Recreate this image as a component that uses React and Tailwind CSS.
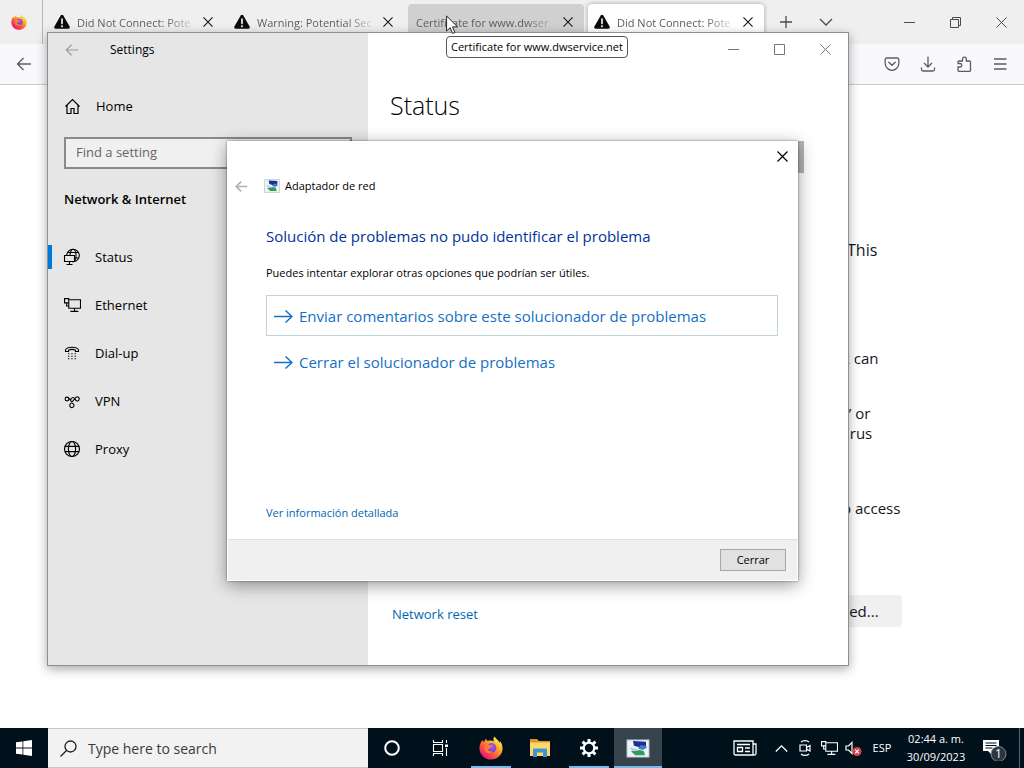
/**
 * Desktop
 * -------
 * A Windows desktop with three layers:
 *  - a browser filling the screen
 *  - the Settings window (Network & Internet > Status)
 *  - the network adapter troubleshooter dialog
 * The taskbar sits at the bottom.
 */

import React from "react";

/* -----------------------------
   SHARED ICONS
------------------------------ */
function Stroke({ size = 16, box = 16, width = 1, className = "", children }) {
  return (
    <svg
      width={size}
      height={size}
      viewBox={`0 0 ${box} ${box}`}
      fill="none"
      stroke="currentColor"
      strokeWidth={width}
      className={`shrink-0 ${className}`}
      aria-hidden="true"
    >
      {children}
    </svg>
  );
}

const CloseIcon = ({ size = 11, width = 1 }) => (
  <Stroke size={size} box={11} width={width}>
    <path d="M.5 .5l10 10M10.5 .5l-10 10" />
  </Stroke>
);

const MinimizeIcon = () => (
  <Stroke size={11} box={11}>
    <path d="M0 5.5h11" />
  </Stroke>
);

const MaximizeIcon = () => (
  <Stroke size={11} box={11}>
    <path d="M.5 .5h10v10H.5z" />
  </Stroke>
);

const RestoreIcon = () => (
  <Stroke size={11} box={11}>
    <path d="M.5 2.5h8v8h-8zM2.5 2.5v-2h8v8h-2" />
  </Stroke>
);

const BackIcon = ({ size = 16, width = 1 }) => (
  <Stroke size={size} width={width}>
    <path d="M15 8H1.5M7.5 2L1.5 8l6 6" />
  </Stroke>
);

const WarningIcon = () => (
  <svg width="16" height="16" viewBox="0 0 16 16" className="shrink-0" aria-hidden="true">
    <path d="M6.7 1.6a1.5 1.5 0 0 1 2.6 0l6.300 11a1.5 1.5 0 0 1-1.3 2.2H1.700a1.5 1.5 0 0 1-1.300-2.2z" fill="#0c0c0d" />
    <path d="M8 5v4.6" stroke="#fff" strokeWidth="1.6" strokeLinecap="round" />
    <circle cx="8" cy="12.2" r="1" fill="#fff" />
  </svg>
);

function FirefoxIcon({ size, id }) {
  return (
    <svg width={size} height={size} viewBox="0 0 24 24" className="shrink-0" aria-hidden="true">
      <defs>
        <linearGradient id={`${id}-fire`} x1="20" y1="3" x2="5" y2="21" gradientUnits="userSpaceOnUse">
          <stop offset="0" stopColor="#fff14a" />
          <stop offset=".35" stopColor="#ffa52c" />
          <stop offset=".65" stopColor="#ff5a36" />
          <stop offset="1" stopColor="#e8177a" />
        </linearGradient>
        <radialGradient id={`${id}-globe`} cx=".6" cy=".3" r=".8">
          <stop offset="0" stopColor="#a85cf0" />
          <stop offset="1" stopColor="#5b3fc4" />
        </radialGradient>
      </defs>
      <path
        d="M15.4.6c-1.3 1.5-1.2 3.4-.4 4.8-1.8-1-4-1.2-6.2-.5-1-.5-1.6-1.5-1.7-2.2C6 3.6 5.4 4.8 5.3 6 4.5 5.8 3.700 5 3.500 4 1.400 6.600.300 9.400.500 13c.4 6.200 5.300 10.600 11.500 10.600S23.600 18.800 23.600 12.600c0-3-1-5.700-2.700-7.600.1 1 .1 1.600 0 2.200C20 4.300 17 3.400 15.400.6z"
        fill={`url(#${id}-fire)`}
      />
      <circle cx="12.6" cy="11.8" r="4.8" fill={`url(#${id}-globe)`} />
      <path
        d="M6 9.2c1.600-1.200 3.500-1 4.900.1 1 .2 2.200 0 2.700.6-.2 1.100-1.700 1.200-2.200 1.900-.2 1.300-1.500 1.700-2.700 1.700.8 1.700 3.200 2.300 5.200 1.200-1.500 3-6 3.300-8-.2C5 12.800 5 10.700 6 9.200z"
        fill="#ff7a35"
      />
    </svg>
  );
}

/* Monitor with a blue and green globe, used by the troubleshooter */
function TroubleshooterIcon({ className = "w-4 h-[14px]" }) {
  return (
    <svg viewBox="0 0 24 20" className={`shrink-0 ${className}`} preserveAspectRatio="none" aria-hidden="true">
      <rect x="1" y="1" width="22" height="18" fill="#eef3f8" stroke="#b4c2d0" />
      <path d="M7 2l13 1v5l-4 1.500L8 7z" fill="#1a2f9c" />
      <path d="M14 7c3-1 6 0 7 2l-4 2.500-5-1.500z" fill="#4a7ac0" />
      <path d="M5 13c4-2 9-2 13 0l1 4H9z" fill="#2f9b62" />
      <path d="M3 9c3 0 7 1 10 3l-6 1z" fill="#b9cfe4" />
    </svg>
  );
}

const PcIcon = ({ size = 16 }) => (
  <Stroke size={size}>
    <path d="M5 2.5h10.500v8H4.500V6M10 10.500v3M6 13.500h7.500M.5 1.500h4v4h-4zM2.500 5.500v3h2" />
  </Stroke>
);

/* -----------------------------
   BROWSER
------------------------------ */
const tabs = [
  { title: "Did Not Connect: Pote", warning: true },
  { title: "Warning: Potential Sec", warning: true },
  { title: "Certificate for www.dwser", hovered: true },
  { title: "Did Not Connect: Pote", warning: true, active: true },
];

function BrowserTab({ title, warning, hovered, active }) {
  const look = active
    ? "bg-white shadow-[0_0_4px_rgba(0,0,0,0.35)]"
    : hovered
      ? "bg-[#d0d0d0]"
      : "";
  return (
    <div
      role="tab"
      aria-selected={Boolean(active)}
      className={`mx-0.5 flex h-9 w-44 items-center rounded-t pl-2 pr-[11px] text-[#5b5b66] ${look}`}
    >
      {warning && (
        <span className="-ml-0.5 mr-[7px]">
          <WarningIcon />
        </span>
      )}
      <span className="min-w-0 flex-1 whitespace-nowrap pt-0.5 text-[11px] leading-4 [mask-image:linear-gradient(to_left,transparent,black_32px)]">
        {title}
      </span>
      <button type="button" aria-label="Close tab" className="ml-1.5 text-[#15141a]">
        <CloseIcon size={10} width={1.2} />
      </button>
    </div>
  );
}

function Browser() {
  return (
    <div className="flex flex-1 flex-col bg-white">
      {/* Tab strip */}
      <div className="flex h-11 items-center bg-[#efefef] text-[#4a4a52]">
        <div className="flex h-11 w-[43px] items-center justify-center border-r border-[#b9b9b9] pr-1">
          <FirefoxIcon size={16} id="pinned" />
        </div>
        <div role="tablist" className="ml-[3px] flex">
          {tabs.map((tab, i) => (
            <BrowserTab key={i} {...tab} />
          ))}
        </div>
        <button type="button" aria-label="New tab" className="flex w-10 justify-center">
          <Stroke size={12} box={12} width={1.3}>
            <path d="M6 0v12M0 6h12" />
          </Stroke>
        </button>
        <button type="button" aria-label="List all tabs" className="flex w-10 justify-center">
          <Stroke size={14} box={14} width={1.3}>
            <path d="M1 4l6 6 6-6" />
          </Stroke>
        </button>
        <div className="ml-auto flex">
          <button type="button" aria-label="Minimize" className="flex w-[46px] justify-center">
            <MinimizeIcon />
          </button>
          <button type="button" aria-label="Restore" className="flex w-[46px] justify-center">
            <RestoreIcon />
          </button>
          <button type="button" aria-label="Close" className="flex w-[46px] justify-center">
            <CloseIcon />
          </button>
        </div>
      </div>

      {/* Toolbar */}
      <div className="flex h-[41px] items-center justify-between border-b border-[#cbcbce] bg-[#f9f9fb] px-4 text-[#5b5b66]">
        <button type="button" aria-label="Back">
          <BackIcon width={1.3} />
        </button>
        <div className="flex gap-5">
          <button type="button" aria-label="Save to Pocket">
            <Stroke width={1.3}>
              <path d="M2.5 2h11a1.300 1.300 0 0 1 1.300 1.300V7.500a6.800 6.800 0 0 1-13.600 0V3.300A1.300 1.300 0 0 1 2.500 2z" />
              <path d="M4.8 6.200L8 9.300l3.200-3.100" strokeLinecap="round" />
            </Stroke>
          </button>
          <button type="button" aria-label="Downloads">
            <Stroke width={1.3}>
              <path d="M8 .5v10.500M4 7l4 4 4-4M1.500 11.500v2a1.500 1.500 0 0 0 1.500 1.500h10a1.500 1.500 0 0 0 1.500-1.500v-2" />
            </Stroke>
          </button>
          <button type="button" aria-label="Extensions">
            <Stroke width={1.3}>
              <path d="M2 14.500V11h2a1.700 1.700 0 0 0 0-3.500H2V6a1 1 0 0 1 1-1h3.500V3a1.900 1.900 0 0 1 3.800 0v2H13.500a1 1 0 0 1 1 1v8.500a.8.800 0 0 1-.8.800H2.800a.8.800 0 0 1-.8-.8z" />
            </Stroke>
          </button>
          <button type="button" aria-label="Open application menu">
            <Stroke width={1.3}>
              <path d="M2 3h12.500M2 8h12.500M2 13h12.500" />
            </Stroke>
          </button>
        </div>
      </div>

      {/* Page text, mostly covered by the Settings window */}
      <main className="ml-[842px] pt-[153px] text-[15px] leading-5 text-[#15141a]">
        <p className="pl-[5px] text-base leading-6">This</p>
        <p className="mt-[86px]">x can</p>
        <p className="mt-[35px] pl-1">
          ” or
          <br />
          irus
        </p>
        <p className="mt-[55px]">o access</p>
        <button
          type="button"
          className="mt-[77px] block h-8 rounded bg-[#f0f0f1] pr-[23px] text-[15px] font-medium"
        >
          ced...
        </button>
      </main>
    </div>
  );
}

/* -----------------------------
   SETTINGS WINDOW
------------------------------ */
const GlobeIcon = () => (
  <Stroke size={18} box={18} width={1.2}>
    <circle cx="9" cy="9" r="7.5" />
    <ellipse cx="9" cy="9" rx="3.6" ry="7.5" />
    <path d="M2 6.300h14M2 11.700h14" />
  </Stroke>
);

/* Globe with a small monitor in front of it */
const StatusIcon = () => (
  <Stroke size={18} box={18} width={1.1}>
    <circle cx="10" cy="7.5" r="6.3" />
    <ellipse cx="10" cy="7.5" rx="3" ry="6.3" />
    <path d="M4.500 4.500h11M4 10h12" />
    <path d="M1.500 7.500h10v6h-10z" fill="#e6e6e6" />
    <path d="M6.500 13.500v3M3.500 16.500h6" />
  </Stroke>
);

const DialUpIcon = () => (
  <Stroke size={16} width={1.1}>
    <path d="M1.500 6.500V5C3 1.300 13 1.300 14.500 5v1.500h-3V5.200c-2-1-5-1-7 0v1.300z" />
    <path d="M4 8.800h8M4 11.300h8M4 13.800h8" strokeDasharray="1.3 2" />
  </Stroke>
);

const VpnIcon = () => (
  <Stroke size={17} box={17} width={1.1}>
    <circle cx="3" cy="6" r="1.900" />
    <path d="M4.800 5l4 5.600a2.100 2.100 0 1 1-2.600.6l5.600-6.700a2 2 0 1 1 .6 3.200c-1.500-.6-1.500-3.200-3.400-3.200-1.300 0-1.600 1.200-2.500 2.300" />
  </Stroke>
);

const settingsNav = [
  { label: "Status", icon: <StatusIcon />, active: true },
  { label: "Ethernet", icon: <PcIcon size={17} /> },
  { label: "Dial-up", icon: <DialUpIcon /> },
  { label: "VPN", icon: <VpnIcon /> },
  { label: "Proxy", icon: <GlobeIcon /> },
];

function SettingsWindow() {
  return (
    <section
      aria-label="Settings"
      className="absolute left-[47px] top-8 flex h-[634px] w-[802px] border border-[#8f8f8f] bg-white text-sm text-black shadow-[0_3px_10px_rgba(0,0,0,0.35)]"
    >
      {/* Sidebar */}
      <aside className="w-80 bg-[#e6e6e6]">
        <div className="flex h-[33px] items-center pl-[17px] text-xs">
          <button type="button" aria-label="Back" className="mr-[31px] text-[#9a9a9a]">
            <BackIcon size={14} width={1.3} />
          </button>
          Settings
        </div>
        <a href="#home" className="mt-6 flex h-8 items-center gap-[15px] pl-4 text-[13px]">
          <Stroke size={17} box={17} width={1.2}>
            <path d="M1.500 8.500l7-7 7 7M3 7.500v8h4v-5h3v5h4v-8" />
          </Stroke>
          Home
        </a>
        <div className="mt-[15px] px-4">
          <input
            type="text"
            aria-label="Find a setting"
            placeholder="Find a setting"
            className="block h-8 w-full border-2 border-[#8a8a8a] bg-[#f0f0f0] px-2.5 pb-0.5 text-[13px] placeholder:text-[#666]"
          />
        </div>
        <h2 className="mt-5 pl-4 text-[13px] font-semibold leading-5">Network &amp; Internet</h2>
        <nav className="mt-6">
          {settingsNav.map((item) => (
            <a key={item.label} href={`#${item.label}`} className="flex h-12 items-center text-[13px]">
              <span className={`h-6 w-1 ${item.active ? "bg-[#0078d7]" : ""}`} />
              <span className="ml-[11px] mr-3.5 flex w-[18px] justify-center">{item.icon}</span>
              {item.label}
            </a>
          ))}
        </nav>
      </aside>

      {/* Content */}
      <div className="flex flex-1 flex-col">
        <div className="flex h-8 justify-end text-[#777]">
          <button type="button" aria-label="Minimize" className="flex w-[46px] items-center justify-center">
            <MinimizeIcon />
          </button>
          <button type="button" aria-label="Maximize" className="flex w-[46px] items-center justify-center">
            <MaximizeIcon />
          </button>
          <button type="button" aria-label="Close" className="flex w-[46px] items-center justify-center">
            <CloseIcon />
          </button>
        </div>
        <h1 className="mt-6 pl-[22px] text-[25px] font-light leading-8">Status</h1>
        {/* Scrollbar thumb */}
        <div className="ml-auto mr-11 mt-5 h-8 w-4 bg-[#b5b5b5]" />
        <a href="#reset" className="mb-[41px] mt-auto self-start pl-6 text-[13px] leading-5 text-[#0067b3]">
          Network reset
        </a>
      </div>
    </section>
  );
}

/* -----------------------------
   TROUBLESHOOTER DIALOG
------------------------------ */
function ArrowLink({ outlined, children }) {
  return (
    <button
      type="button"
      className={`flex h-[41px] w-full items-center gap-1.5 border pl-[7px] text-[15px] text-[#1570c4] ${
        outlined ? "border-[#c3d3da]" : "border-transparent"
      }`}
    >
      <Stroke size={19} box={19} width={1.5}>
        <path d="M0 10.500h18M11.500 4.500l6.500 6-6.500 6" />
      </Stroke>
      {children}
    </button>
  );
}

function TroubleshooterDialog() {
  return (
    <section
      role="dialog"
      aria-label="Adaptador de red"
      className="absolute left-[227px] top-[141px] flex min-h-[440px] w-[571px] flex-col bg-white text-[11px] leading-4 text-black shadow-[0_4px_16px_rgba(0,0,0,0.4),0_0_2px_rgba(0,0,0,0.5)]"
    >
      <button type="button" aria-label="Cerrar" className="flex h-[30px] w-8 items-center justify-center self-end">
        <CloseIcon width={1.2} />
      </button>
      <div className="flex h-[30px] items-center pl-2">
        <button type="button" aria-label="Back" className="mr-4 text-[#b0b0b0]">
          <BackIcon size={13} width={2} />
        </button>
        <TroubleshooterIcon />
        <span className="ml-[5px]">Adaptador de red</span>
      </div>
      <div className="flex flex-1 flex-col items-start pl-[39px] pr-5">
        <h2 className="mt-[23px] text-[15px] leading-6 text-[#003399]">
          Solución de problemas no pudo identificar el problema
        </h2>
        <p className="mb-3.5 mt-[17px]">Puedes intentar explorar otras opciones que podrían ser útiles.</p>
        <div className="flex w-full flex-col gap-[5px]">
          <ArrowLink outlined>Enviar comentarios sobre este solucionador de problemas</ArrowLink>
          <ArrowLink>Cerrar el solucionador de problemas</ArrowLink>
        </div>
        <a href="#details" className="mb-[18px] mt-auto text-[#0066b4]">
          Ver información detallada
        </a>
      </div>
      <footer className="flex h-[42px] items-center justify-end border border-t-[#dfdfdf] border-x-white border-b-white bg-[#f0f0f0] pr-[11px]">
        <button type="button" className="h-[22px] w-[66px] border border-[#a5a5a5] bg-[#e1e1e1]">
          Cerrar
        </button>
      </footer>
    </section>
  );
}

/* -----------------------------
   TASKBAR
------------------------------ */
function TaskButton({ label, running, active, children }) {
  return (
    <button
      type="button"
      aria-label={label}
      className={`relative flex h-10 w-12 items-center justify-center ${active ? "bg-[#36434d]" : ""}`}
    >
      {children}
      {running && (
        <span className={`absolute bottom-0 h-0.5 bg-[#76b9ed] ${active ? "inset-x-0" : "inset-x-1"}`} />
      )}
    </button>
  );
}

function Taskbar() {
  return (
    <footer className="flex h-10 items-stretch bg-[#00111c] text-white">
      <TaskButton label="Start">
        <svg width="16" height="16" viewBox="0 0 16 16" fill="#fff" aria-hidden="true">
          <path d="M0 2.300l6.500-.9v6.200H0zM7.300 1.300L16 0v7.600H7.300zM0 8.400h6.500v6.200L0 13.700zM7.300 8.400H16V16l-8.700-1.200z" />
        </svg>
      </TaskButton>
      <label className="flex w-80 items-center border-y border-[#c4c4c4] bg-[#f2f2f2] pl-3 text-[#1b1b1b]">
        <Stroke size={17} box={17} width={1.3}>
          <circle cx="10.5" cy="6.5" r="5.5" />
          <path d="M6.500 10.500l-6 6" />
        </Stroke>
        <input
          type="text"
          aria-label="Type here to search"
          placeholder="Type here to search"
          className="ml-[11px] min-w-0 flex-1 bg-transparent pt-0.5 text-sm placeholder:text-[#3a3a3a]"
        />
      </label>
      <TaskButton label="Cortana">
        <Stroke width={2}>
          <circle cx="8" cy="8" r="6.8" />
        </Stroke>
      </TaskButton>
      <TaskButton label="Task View">
        <Stroke width={1.1}>
          <path d="M1.500 4.500h9v7h-9zM1.500 0v2.500h9V0M1.500 16v-2.500h9V16M14.500 0v3M14.500 8v8" />
          <path d="M13 4.500h3v2.500h-3z" fill="currentColor" stroke="none" />
        </Stroke>
      </TaskButton>
      <div className="ml-[3px] flex gap-px">
        <TaskButton label="Firefox" running>
          <FirefoxIcon size={24} id="taskbar" />
        </TaskButton>
        <TaskButton label="File Explorer">
          <svg width="22" height="20" viewBox="0 0 22 20" aria-hidden="true">
            <path d="M1 1h7l2 2h11v4H1z" fill="#d99a2b" />
            <path d="M1 4.500h20V18H1z" fill="#ffd869" />
            <path d="M4 19v-7.500a1 1 0 0 1 1-1h12a1 1 0 0 1 1 1V19h-4v-4.500H8V19z" fill="#3f95cf" />
          </svg>
        </TaskButton>
        <TaskButton label="Settings" running>
          <Stroke size={18} box={18}>
            <circle cx="9" cy="9" r="5.3" strokeWidth="2.2" />
            <path
              d="M9 0v3.500M9 14.500V18M0 9h3.500M14.500 9H18M2.600 2.600l2.400 2.400M13 13l2.400 2.400M2.600 15.400L5 13M13 5l2.400-2.400"
              strokeWidth="3"
            />
          </Stroke>
        </TaskButton>
        <TaskButton label="Adaptador de red" running active>
          <TroubleshooterIcon className="h-[19px] w-6" />
        </TaskButton>
      </div>

      {/* Notification area */}
      <div className="ml-auto flex items-center">
        <button type="button" aria-label="News" className="flex w-12 justify-center">
          <svg width="24" height="16" viewBox="0 0 24 16" fill="none" stroke="#fff" strokeWidth="1.3" aria-hidden="true">
            <path d="M1 1h19v14H2.500A1.500 1.500 0 0 1 1 13.500zM20 4h3v9.500a1.500 1.500 0 0 1-3 0" />
            <path d="M4 4.500h13M4.500 7.500h5v4h-5zM12 8h5M12 11.500h5" />
          </svg>
        </button>
        <button type="button" aria-label="Show hidden icons" className="flex w-6 justify-center">
          <Stroke size={13} box={13} width={1.3}>
            <path d="M.8 9.500L6.500 3.800l5.700 5.700" />
          </Stroke>
        </button>
        <button type="button" aria-label="Meet Now" className="flex w-6 justify-center">
          <Stroke width={1.2}>
            <path d="M3 5h6.500v6H3zM9.500 7.500l3.500-2v5.500l-3.500-2M4 2c2-1.800 6-1.800 8 0M4 14c2 1.800 6 1.800 8 0" />
          </Stroke>
        </button>
        <button type="button" aria-label="Network" className="flex w-6 justify-center">
          <PcIcon size={17} />
        </button>
        <button type="button" aria-label="Volume" className="flex w-6 justify-center">
          <Stroke size={17} box={17} width={1.2}>
            <path d="M1 6h2.500L7 2.500v11L3.500 10H1z" />
            <circle cx="12" cy="11.5" r="4.5" fill="#d8404a" stroke="none" />
            <path d="M10.200 9.700l3.600 3.600M13.800 9.700l-3.600 3.600" />
          </Stroke>
        </button>
        <button type="button" className="w-[34px] text-center text-[11px]">
          ESP
        </button>
        <button type="button" className="w-[74px] text-center text-[11px] leading-[18px]">
          02:44 a. m.
          <br />
          30/09/2023
        </button>
        <button type="button" aria-label="Notifications" className="flex w-[46px] justify-center">
          <svg width="26" height="26" viewBox="0 0 26 26" aria-hidden="true">
            <path d="M0 5h16v11H9v4l-4-4H0z" fill="#fff" />
            <path d="M2.500 8h11M2.500 10.500h11M2.500 13h7" stroke="#00111c" strokeWidth="1.1" />
            <circle cx="15.500" cy="19" r="7.5" fill="#2b3740" stroke="#7c868d" />
            <text x="15.500" y="23" textAnchor="middle" fontSize="12" fill="#fff">
              1
            </text>
          </svg>
        </button>
        <button type="button" aria-label="Show desktop" className="h-10 w-[5px] border-l border-[#56636c]" />
      </div>
    </footer>
  );
}

export default function App() {
  return (
    <div className="relative flex min-h-screen flex-col overflow-hidden font-['Open_Sans','Noto_Sans',sans-serif]">
      <Browser />
      <SettingsWindow />
      <TroubleshooterDialog />
      <Taskbar />

      {/* Tab tooltip and mouse pointer */}
      <div
        role="tooltip"
        className="absolute left-[446px] top-[36px] rounded border border-[#55555e] bg-white px-1 text-[11px] leading-5 text-black"
      >
        Certificate for www.dwservice.net
      </div>
      <svg width="13" height="20" viewBox="0 0 13 20" className="absolute left-[446px] top-[15px]" aria-hidden="true">
        <path d="M.6 1v15l3.600-3.300 2.400 5.800 2.300-1-2.400-5.600h5z" fill="#fff" stroke="#222" />
      </svg>
    </div>
  );
}
